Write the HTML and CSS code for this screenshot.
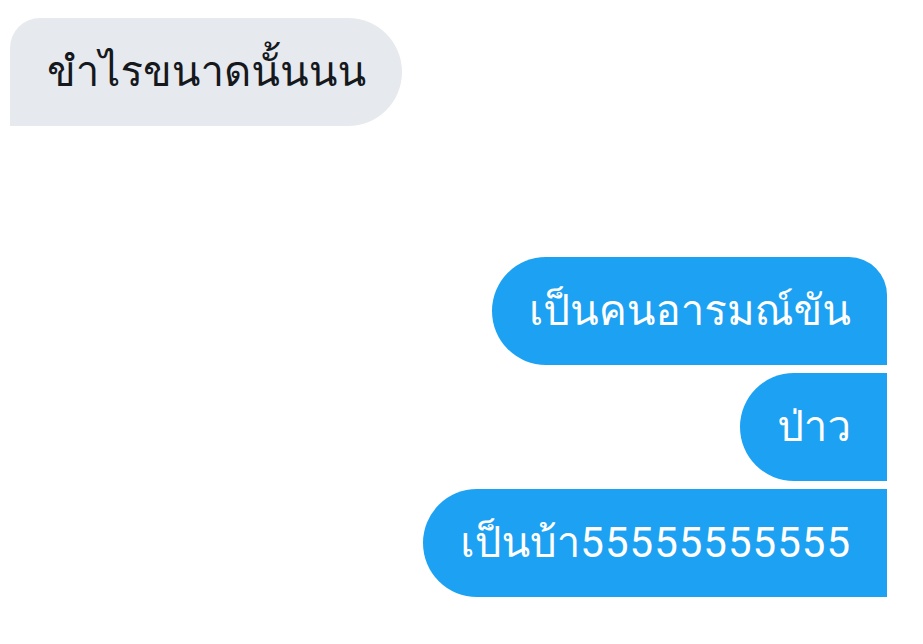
FILE: index.html
```html
<!DOCTYPE html>
<html lang="th">
<head>
<meta charset="utf-8">
<link rel="stylesheet" href="styles.css">
</head>
<body>
<div class="chat">
  <div class="bubble in">ขำไรขนาดนั้นนน</div>
  <div class="group">
    <div class="bubble out first">เป็นคนอารมณ์ขัน</div>
    <div class="bubble out">ป่าว</div>
    <div class="bubble out">เป็นบ้า<span class="num">55555555555</span></div>
  </div>
</div>
</body>
</html>
```
FILE: styles.css
```css
html, body {
  margin: 0;
  background: #ffffff;
}
.chat {
  width: 923px;
  height: 644px;
  box-sizing: border-box;
  padding: 18px 36px 0 10px;
  display: flex;
  flex-direction: column;
  font-family: Roboto, Loma, sans-serif;
  font-size: 42px;
}
.bubble {
  box-sizing: border-box;
  height: 108px;
  line-height: 108px;
  padding: 0 36px 0 37px;
  white-space: nowrap;
}
.num {
  letter-spacing: 1px;
}
.in {
  align-self: flex-start;
  background: #e6e9ed;
  color: #15181c;
  border-radius: 30px 54px 54px 0;
}
.group {
  margin-top: 131px;
  display: flex;
  flex-direction: column;
  align-items: flex-end;
  gap: 8px;
}
.out {
  background: #1da1f2;
  color: #ffffff;
  border-radius: 54px 0 0 54px;
}
.out.first {
  border-radius: 54px 38px 0 54px;
}
```
